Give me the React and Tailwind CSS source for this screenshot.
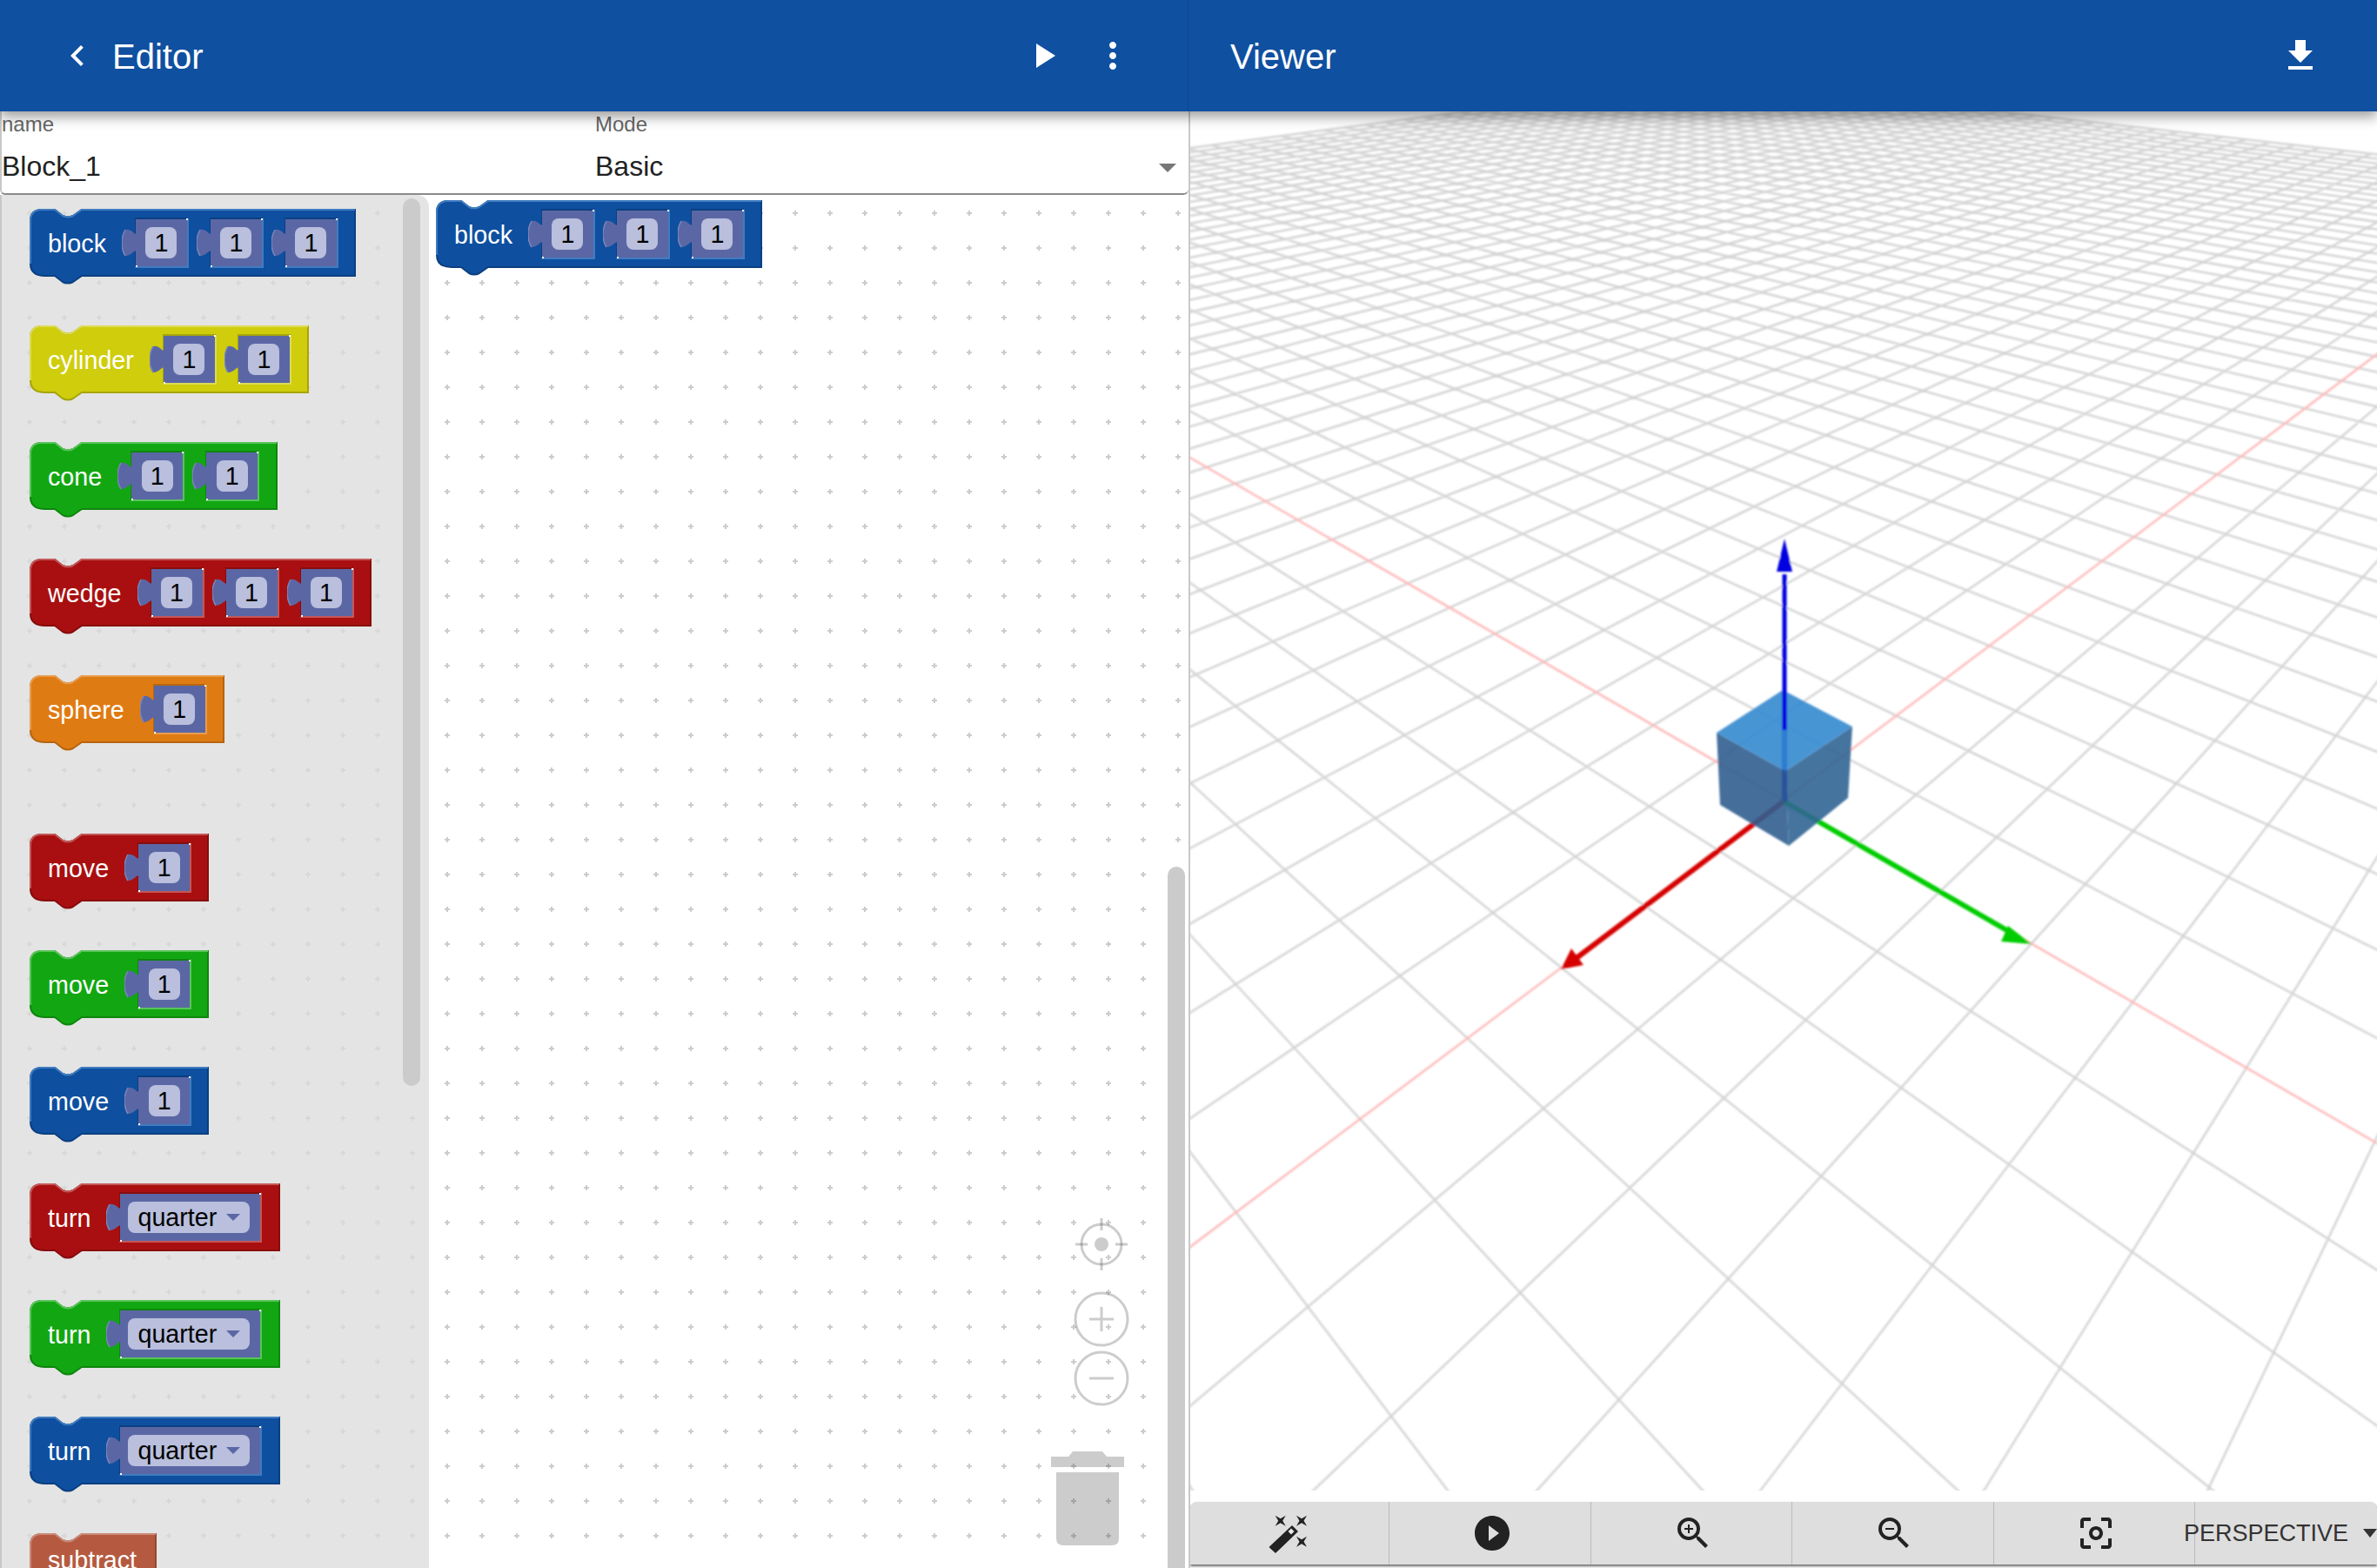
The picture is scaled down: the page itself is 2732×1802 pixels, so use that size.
import React from "react";
import {
  MdCenterFocusWeak,
  MdChevronLeft,
  MdFileDownload,
  MdMoreVert,
  MdPlayArrow,
  MdPlayCircleFilled,
  MdZoomIn,
  MdZoomOut,
} from "react-icons/md";

const FONT = "font-['Liberation_Sans',Arial,sans-serif]";

const palette = {
  blue: { fill: "#0e4fa0", light: "#3f7cc0", dark: "#0b3f80" },
  yellow: { fill: "#cfcd0c", light: "#dddb55", dark: "#a6a40a" },
  green: { fill: "#12a712", light: "#59c459", dark: "#0e860e" },
  red: { fill: "#a90f10", light: "#c45758", dark: "#870c0d" },
  orange: { fill: "#df7b13", light: "#e99c4c", dark: "#b6650f" },
  clay: { fill: "#b55a40", light: "#cb8a77", dark: "#914833" },
};

const toolbox = [
  { label: "block", color: "blue", width: 375, slots: 3 },
  { label: "cylinder", color: "yellow", width: 321, slots: 2 },
  { label: "cone", color: "green", width: 285, slots: 2 },
  { label: "wedge", color: "red", width: 393, slots: 3 },
  { label: "sphere", color: "orange", width: 224, slots: 1 },
  { label: "move", color: "red", width: 206, slots: 1, gapBefore: true },
  { label: "move", color: "green", width: 206, slots: 1 },
  { label: "move", color: "blue", width: 206, slots: 1 },
  { label: "turn", color: "red", width: 288, dropdown: true },
  { label: "turn", color: "green", width: 288, dropdown: true },
  { label: "turn", color: "blue", width: 288, dropdown: true },
  { label: "subtract", color: "clay", width: 146, raised: true },
];

const BLOCK_H = 77;

function blockPath(w) {
  const h = BLOCK_H;
  return `M1 14 Q1 1 14 1 L29 1 L38 8 Q44 11 50 8 L60 1 L${w - 1} 1 L${w - 1} ${h} L60 ${h} L50 ${h + 7} Q44 ${h + 10} 38 ${h + 7} L29 ${h} L18 ${h} Q1 ${h} 1 ${h - 14} Z`;
}

const PuzzleTab = () => (
  <svg width="20" height="32" viewBox="0 0 20 32" className="absolute -left-[16px] top-[11px]">
    <path d="M20 7 L14 5 Q9 0 4 1 Q0 8 0 16 Q0 25 4 31 Q9 31 14 26 L20 24 Z" fill="#5b67a5" />
    <path d="M4 1 Q0 8 0 16 Q0 25 4 31" fill="none" stroke="#7c86ba" strokeWidth="1.5" />
  </svg>
);

const Slot = ({ wide, tone }) => (
  <div
    className={`relative flex h-[58px] shrink-0 items-center border-t-2 border-b-2 border-l border-r-2 bg-[#5b67a5] ${wide ? "w-[164px] pl-[9px]" : "w-[62px] justify-center"}`}
    style={{
      borderTopColor: tone.dark,
      borderLeftColor: tone.dark,
      borderRightColor: tone.light,
      borderBottomColor: tone.light,
    }}
  >
    <PuzzleTab />
    <span className="absolute -right-px -top-px h-[2px] w-[2px] bg-white" />
    <span className="absolute -bottom-px left-0 h-[2px] w-[2px] bg-white" />
    {wide ? (
      <div className="flex h-[36px] w-[140px] items-center gap-[11px] rounded-[8px] bg-[#b9bfdc] pl-[11px] text-[28.7px] text-black">
        quarter
        <svg width="16" height="8" viewBox="0 0 16 8">
          <path d="M0 0H16L8 8Z" fill="#5b67a5" />
        </svg>
      </div>
    ) : (
      <div className="flex h-[36px] w-[36px] items-center justify-center rounded-[8px] bg-[#b9bfdc] text-[28.7px] text-black">
        1
      </div>
    )}
  </div>
);

const Block = ({ label, color, width, slots = 0, dropdown, raised }) => {
  const tone = palette[color];
  return (
    <div className="relative h-[78px] shrink-0" style={{ width }}>
      <svg width={width} height="88" className="absolute left-0 top-0">
        <path d={blockPath(width)} fill={tone.fill} stroke={tone.dark} strokeWidth="2" />
        <path
          d={`M1 ${BLOCK_H - 14} L1 14 Q1 1 14 1 L29 1 L38 8 Q44 11 50 8 L60 1 L${width - 1} 1`}
          fill="none"
          stroke={tone.light}
          strokeWidth="2"
        />
      </svg>
      <div className={`relative flex h-[78px] items-center gap-[24px] pl-[21px] text-[28.7px] leading-none ${FONT}`}>
        <span className={`mr-[9px] text-white ${raised ? "-translate-y-[8px]" : "translate-y-[1px]"}`}>{label}</span>
        {dropdown && <Slot wide tone={tone} />}
        {Array.from({ length: slots }).map((_, i) => (
          <Slot key={i} tone={tone} />
        ))}
      </div>
    </div>
  );
};

const PlusGrid = ({ id, color, x }) => (
  <svg width="100%" height="100%" className="absolute inset-0">
    <defs>
      <pattern id={id} x={x} y="18" width="40" height="40" patternUnits="userSpaceOnUse">
        <path d="M0 3H6M3 0V6" stroke={color} strokeWidth="2" />
      </pattern>
    </defs>
    <rect width="100%" height="100%" fill={`url(#${id})`} />
  </svg>
);

const WorkspaceControls = () => (
  <svg className="absolute inset-0 h-full w-full" fill="none" stroke="#000" strokeOpacity="0.2">
    <g strokeWidth="3">
      <circle cx="1266" cy="1206" r="23" />
      <path d="M1266 1176V1190M1266 1222V1236M1236 1206H1250M1282 1206H1296" />
      <circle cx="1266" cy="1206" r="8" fill="#000" fillOpacity="0.2" stroke="none" />
      <circle cx="1266" cy="1292" r="30" />
      <path d="M1252 1292H1280M1266 1278V1306" />
      <circle cx="1266" cy="1360" r="30" />
      <path d="M1252 1360H1280" />
    </g>
    <path
      d="M1208 1450H1228L1233 1444H1267L1272 1450H1292V1462H1208ZM1214 1468H1286V1544Q1286 1552 1278 1552H1222Q1214 1552 1214 1544Z"
      fill="#000"
      fillOpacity="0.2"
      stroke="none"
    />
  </svg>
);

// camera fitted to the three axes and the cube
const CAM = { f: 1163, d: 10.7, sinE: 0.659, cosE: 0.752, cx: 682, cy: 792, gs: 0.752, gc: 0.659, rs: 0.659, rc: 0.752 };

function toScene(u, v) {
  const t = u * CAM.gc + v * CAM.rc;
  const x = u * CAM.gs - v * CAM.rs;
  const depth = CAM.d - t * CAM.cosE;
  return { depth, x: CAM.cx + (CAM.f * x) / depth, y: CAM.cy + (CAM.f * t * CAM.sinE) / depth };
}

function gridLine(a, b) {
  const depthOf = (p) => CAM.d - (p[0] * CAM.gc + p[1] * CAM.rc) * CAM.cosE;
  let [p, q] = [a, b];
  const dp = depthOf(p);
  const dq = depthOf(q);
  const near = 0.4;
  if (dp < near && dq < near) return null;
  if (dp < near) {
    const s = (near - dp) / (dq - dp);
    p = [p[0] + (q[0] - p[0]) * s, p[1] + (q[1] - p[1]) * s];
  } else if (dq < near) {
    const s = (near - dq) / (dp - dq);
    q = [q[0] + (p[0] - q[0]) * s, q[1] + (p[1] - q[1]) * s];
  }
  const s1 = toScene(p[0], p[1]);
  const s2 = toScene(q[0], q[1]);
  return `M${s1.x.toFixed(1)} ${s1.y.toFixed(1)}L${s2.x.toFixed(1)} ${s2.y.toFixed(1)}`;
}

const N = 44;
let gridPath = "";
for (let i = -N; i <= N; i++) {
  if (i === 0) continue;
  gridPath += gridLine([i, -N], [i, N]) || "";
  gridPath += gridLine([-N, i], [N, i]) || "";
}
const axisPath = (gridLine([0, -N], [0, N]) || "") + (gridLine([-N, 0], [N, 0]) || "");

// cube and arrows are in page pixels, the scene starts at 1368,128
const P = (x, y) => `${x - 1368},${y - 128}`;

const Scene = () => (
  <svg className="absolute left-0 top-0 h-[1585px] w-full" viewBox="0 0 1364 1585">
    <defs>
      <filter id="soft" x="0" y="0" width="100%" height="100%">
        <feGaussianBlur stdDeviation="1" />
      </filter>
    </defs>
    <g filter="url(#soft)">
      <path d={gridPath} fill="none" stroke="#d4d4d4" strokeWidth="2.5" />
      <path d={axisPath} fill="none" stroke="#ffb9b9" strokeWidth="2.5" />
      <path d={`M${P(2050, 921)}L${P(1808, 1104)}`} stroke="#d60000" strokeWidth="6" />
      <path d={`M${P(2050, 921)}L${P(2315, 1074)}`} stroke="#00cc00" strokeWidth="6" />
      <path d={`M${P(2051, 921)}L${P(2051, 839)}`} stroke="#0000e0" strokeWidth="6" />
      <polygon points={`${P(1794, 1114)} ${P(1806, 1090)} ${P(1820, 1109)}`} fill="#d60000" />
      <polygon points={`${P(2335, 1085)} ${P(2308, 1064)} ${P(2300, 1082)}`} fill="#00cc00" />
      <g opacity="0.9">
        <polygon points={`${P(1973, 842)} ${P(2052, 886)} ${P(2056, 972)} ${P(1977, 925)}`} fill="#315f90" />
        <polygon points={`${P(2052, 886)} ${P(2129, 835)} ${P(2124, 917)} ${P(2056, 972)}`} fill="#316594" />
        <polygon points={`${P(2049, 793)} ${P(2129, 835)} ${P(2052, 886)} ${P(1973, 842)}`} fill="#348ad0" />
      </g>
      <path d={`M${P(2051, 839)}L${P(2051, 660)}`} stroke="#0000e0" strokeWidth="5" />
      <polygon points={`${P(2051, 619)} ${P(2042, 657)} ${P(2060, 657)}`} fill="#0000e0" />
    </g>
  </svg>
);

const ToolButton = ({ children }) => (
  <div className="flex w-[232px] items-center justify-center border-r border-[#bbbbbb] pl-[4px] text-[48px] text-[#222222]">
    {children}
  </div>
);

const Sparkle = ({ x, y }) => (
  <path transform={`translate(${x} ${y})`} d="M-6 -6L0 -2.5L6 -6L2.5 0L6 6L0 2.5L-6 6L-2.5 0Z" />
);

const WandIcon = () => (
  <svg width="48" height="48" viewBox="0 0 48 48" fill="#222222">
    <path d="M27 16L33 22L8 46L1.5 40Z" stroke="#222222" strokeWidth="1.5" strokeLinejoin="round" />
    <path d="M26 18.5L29.5 22L26 25.5L22.5 22Z" fill="#e8e8e8" />
    <Sparkle x={13.7} y={9.7} />
    <Sparkle x={38} y={9.7} />
    <Sparkle x={38} y={33.7} />
  </svg>
);

export default function App() {
  return (
    <div className={`flex h-[1802px] w-[2732px] flex-col overflow-hidden bg-white ${FONT}`}>
      <div className="z-20 flex h-[128px] shrink-0 bg-[#0f50a0] text-[40px] text-white shadow-[0_6px_14px_rgba(0,0,0,0.4)]">
        <div className="flex w-[1366px] items-center border-r border-[#0c4690] pl-[65px]">
          <MdChevronLeft size={48} />
          <span className="ml-[16px] pt-[2px]">Editor</span>
          <MdPlayArrow size={48} className="ml-auto" />
          <MdMoreVert size={48} className="ml-[32px] mr-[62px]" />
        </div>
        <div className="flex flex-1 items-center pl-[48px] pr-[64px]">
          <span className="pt-[2px]">Viewer</span>
          <MdFileDownload size={48} className="ml-auto" />
        </div>
      </div>

      <div className="flex min-h-0 flex-1">
        <div className="flex w-[1368px] shrink-0 flex-col border-r-2 border-[#c8c8c8]">
          <div className="flex h-[96px] shrink-0 rounded-b-[6px] border-b-2 border-l-2 border-[#8a8a8a] border-l-[#c8c8c8]">
            <div className="w-[682px] pt-[1px]">
              <div className="text-[24px] leading-[28px] text-[#666666]">name</div>
              <div className="mt-[16px] text-[32px] leading-[36px] text-[#222222]">Block_1</div>
            </div>
            <div className="relative flex-1 pt-[1px]">
              <div className="text-[24px] leading-[28px] text-[#666666]">Mode</div>
              <div className="mt-[16px] text-[32px] leading-[36px] text-[#222222]">Basic</div>
              <svg width="20" height="10" viewBox="0 0 20 10" className="absolute right-[14px] top-[60px]">
                <path d="M0 0H20L10 10Z" fill="#777777" />
              </svg>
            </div>
          </div>

          <div className="relative min-h-0 flex-1 overflow-hidden bg-white">
            <PlusGrid id="workspaceDots" color="#cccccc" x={31} />
            <div className="absolute left-[501px] top-[6px]">
              <Block label="block" color="blue" width={375} slots={3} />
            </div>
            <WorkspaceControls />

            <div className="absolute bottom-0 left-0 top-0 w-[493px] overflow-hidden rounded-tr-[14px] border-l-2 border-[#c8c8c8] bg-[#e4e4e4]">
              <PlusGrid id="flyoutDots" color="#d8d8d8" x={29} />
              <div className="relative flex flex-col gap-[56px] pl-[32px] pt-[16px]">
                {toolbox.map((block, i) => (
                  <div key={i} className={block.gapBefore ? "mt-[48px]" : ""}>
                    <Block {...block} />
                  </div>
                ))}
              </div>
              <div className="absolute left-[461px] top-[4px] h-[1020px] w-[20px] rounded-[10px] bg-[#cbcbcb]" />
            </div>

            <div className="absolute bottom-0 left-[1342px] top-[772px] w-[20px] rounded-t-[10px] bg-[#cbcbcb]" />
          </div>
        </div>

        <div className="relative min-w-0 flex-1 overflow-hidden">
          <Scene />
          <div className="absolute bottom-[4px] left-0 right-0 flex h-[72px] rounded-t-[8px] bg-[#dedede] shadow-[0_2px_3px_rgba(0,0,0,0.6)]">
            <div className="flex w-[230px] items-center justify-center border-r border-[#bbbbbb]">
              <WandIcon />
            </div>
            <ToolButton>
              <MdPlayCircleFilled />
            </ToolButton>
            <ToolButton>
              <MdZoomIn />
            </ToolButton>
            <ToolButton>
              <MdZoomOut />
            </ToolButton>
            <ToolButton>
              <MdCenterFocusWeak />
            </ToolButton>
            <div className="relative flex flex-1 items-center">
              <span className="-ml-[13px] text-[27px] text-[#333333]">PERSPECTIVE</span>
              <svg width="16" height="10" viewBox="0 0 16 10" className="ml-[17px]">
                <path d="M0 0H16L8 10Z" fill="#333333" />
              </svg>
            </div>
          </div>
        </div>
      </div>
    </div>
  );
}
